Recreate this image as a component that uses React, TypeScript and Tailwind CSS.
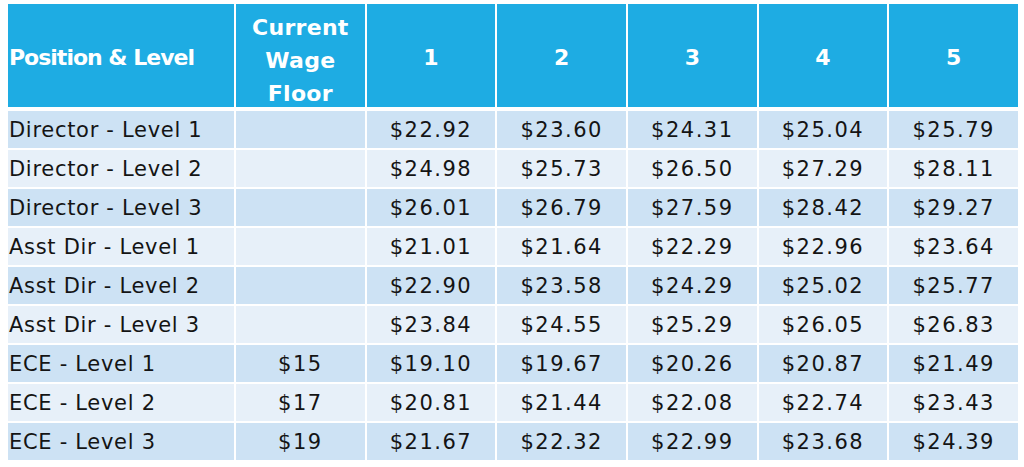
const ROWS = [
  { name: "Director - Level 1", floor: "", wages: ["$22.92", "$23.60", "$24.31", "$25.04", "$25.79"] },
  { name: "Director - Level 2", floor: "", wages: ["$24.98", "$25.73", "$26.50", "$27.29", "$28.11"] },
  { name: "Director - Level 3", floor: "", wages: ["$26.01", "$26.79", "$27.59", "$28.42", "$29.27"] },
  { name: "Asst Dir - Level 1", floor: "", wages: ["$21.01", "$21.64", "$22.29", "$22.96", "$23.64"] },
  { name: "Asst Dir - Level 2", floor: "", wages: ["$22.90", "$23.58", "$24.29", "$25.02", "$25.77"] },
  { name: "Asst Dir - Level 3", floor: "", wages: ["$23.84", "$24.55", "$25.29", "$26.05", "$26.83"] },
  { name: "ECE - Level 1", floor: "$15", wages: ["$19.10", "$19.67", "$20.26", "$20.87", "$21.49"] },
  { name: "ECE - Level 2", floor: "$17", wages: ["$20.81", "$21.44", "$22.08", "$22.74", "$23.43"] },
  { name: "ECE - Level 3", floor: "$19", wages: ["$21.67", "$22.32", "$22.99", "$23.68", "$24.39"] },
];

export default function App() {
  return (
    <div
      className="w-[1024px] h-[467px] bg-white pl-2 pt-1"
      style={{ fontFamily: '"DejaVu Sans", sans-serif' }}
    >
      <div className="w-[1010px] grid grid-cols-[226px_repeat(6,1fr)] gap-x-[2px] text-white font-bold text-[22px]">
        {/* Header */}
        <div className="h-[103px] bg-[#1eace3] tracking-[-1px] flex items-center pl-px pt-1">
          Position &amp; Level
        </div>
        <div className="h-[103px] bg-[#1eace3] tracking-[0.3px] leading-[33px] flex items-center justify-center text-center pt-[9px]">
          Current
          <br />
          Wage
          <br />
          Floor
        </div>
        {["1", "2", "3", "4", "5"].map((h) => (
          <div key={h} className="h-[103px] bg-[#1eace3] flex items-center justify-center pt-1">
            {h}
          </div>
        ))}
      </div>

      <div className="w-[1010px] mt-1 grid grid-cols-[226px_repeat(6,1fr)] gap-[2px] text-[#141414] text-[21px]">
        {ROWS.map((r, i) => {
          const bg = i % 2 === 0 ? "bg-[#cde2f4]" : "bg-[#e7f0f9]";
          return [
            <div key={r.name} className={`h-[37px] ${bg} flex items-center pl-px pt-[3px] tracking-[0.7px]`}>
              {r.name}
            </div>,
            <div key={r.name + "-f"} className={`h-[37px] ${bg} flex items-center justify-center pt-[3px] tracking-[1.5px]`}>
              {r.floor}
            </div>,
            ...r.wages.map((w, j) => (
              <div key={r.name + j} className={`h-[37px] ${bg} flex items-center justify-center pt-[3px] tracking-[1.5px]`}>
                {w}
              </div>
            )),
          ];
        })}
      </div>
    </div>
  );
}
